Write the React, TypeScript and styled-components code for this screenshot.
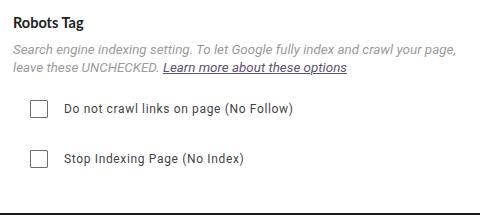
import styled, { createGlobalStyle } from 'styled-components';

const GlobalStyle = createGlobalStyle`
  html, body {
    margin: 0;
    padding: 0;
    background: #fff;
  }
  * {
    box-sizing: border-box;
  }
`;

interface IOption {
  id: string;
  label: string;
}

const OPTIONS: IOption[] = [
  { id: 'nofollow', label: 'Do not crawl links on page (No Follow)' },
  { id: 'noindex', label: 'Stop Indexing Page (No Index)' },
];

function App() {
  return (
    <>
      <GlobalStyle />
      <Panel>
        <Title>Robots Tag</Title>
        <Description>
          Search engine indexing setting. To let Google fully index and crawl
          your page, leave these UNCHECKED.{' '}
          <LearnMore href="#">Learn more about these options</LearnMore>
        </Description>
        <OptionList>
          {OPTIONS.map(({ id, label }) => (
            <Option key={id}>
              <Box type="checkbox" />
              <OptionLabel>{label}</OptionLabel>
            </Option>
          ))}
        </OptionList>
      </Panel>
    </>
  );
}

const Panel = styled.div`
  width: 480px;
  height: 215px;
  padding: 13px 13px 0 13px;
  border-bottom: 2px solid #1a1a1a;
  background: #fff;
`;

const Title = styled.h3`
  margin: 0;
  font-family: Lato, sans-serif;
  font-weight: 700;
  font-size: 14.5px;
  line-height: 20px;
  color: #222;
`;

const Description = styled.p`
  margin: 8px 0 0 0;
  font-family: Roboto, sans-serif;
  font-style: italic;
  font-size: 13.4px;
  line-height: 18px;
  color: #9b9b9b;
`;

const LearnMore = styled.a`
  color: #5e5270;
  text-decoration: underline;
`;

const OptionList = styled.ul`
  list-style: none;
  margin: 23px 0 0 0;
  padding: 0 0 0 17px;
  display: flex;
  flex-direction: column;
  gap: 32px;
`;

const Option = styled.li`
  display: flex;
  align-items: center;
  gap: 16px;
  height: 18px;
`;

const Box = styled.input`
  appearance: none;
  margin: 0;
  width: 18px;
  height: 18px;
  border: 1px solid #6f6f6f;
  border-radius: 1px;
  background: #fff;
`;

const OptionLabel = styled.label`
  font-family: Roboto, sans-serif;
  font-size: 12px;
  letter-spacing: 0.65px;
  color: #444;
`;

export default App;
